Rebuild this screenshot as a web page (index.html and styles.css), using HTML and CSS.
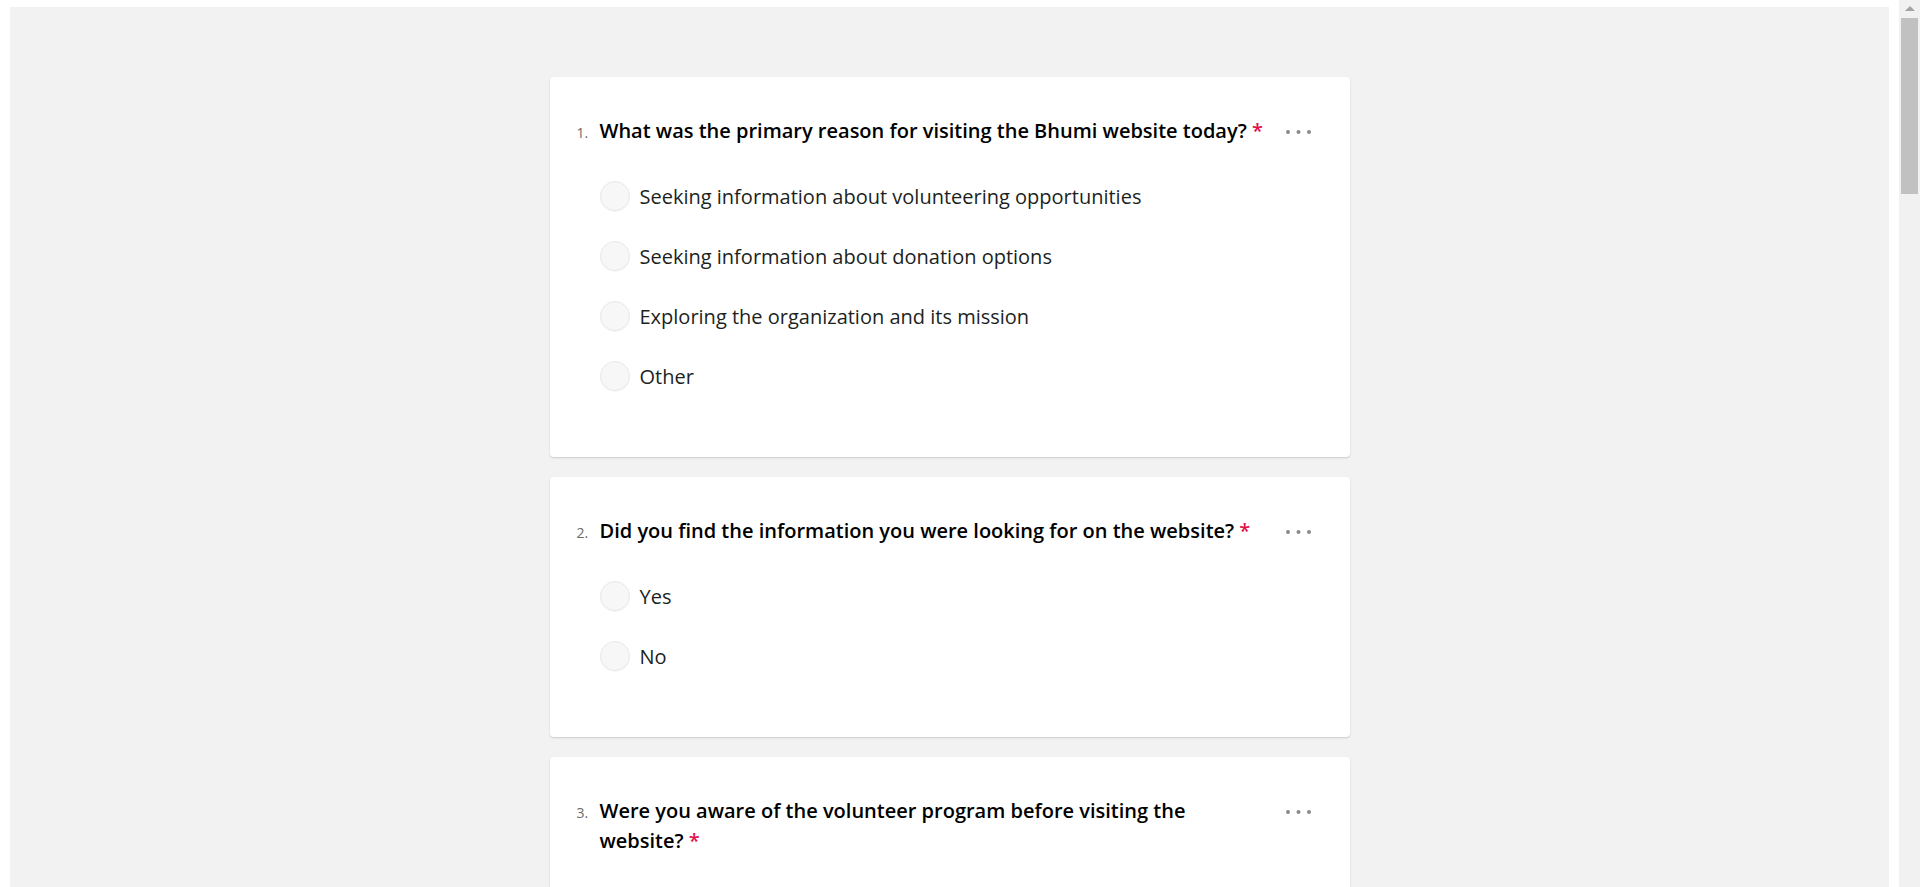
FILE: index.html
```html
<!DOCTYPE html>
<html lang="en">
<head>
<meta charset="utf-8">
<title>Bhumi website survey</title>
<link rel="stylesheet" href="styles.css">
</head>
<body>
<div class="viewport">
  <main class="page">
    <div class="canvas">
      <section class="card">
        <div class="q-head">
          <span class="q-num">1.</span>
          <h2 class="q-title">What was the primary reason for visiting the Bhumi website today? <span class="req">*</span></h2>
          <div class="q-more"><svg width="26" height="4" viewBox="0 0 26 4"><circle cx="2" cy="2" r="2"/><circle cx="12.5" cy="2" r="2"/><circle cx="23" cy="2" r="2"/></svg></div>
        </div>
        <div class="options">
          <label class="opt"><span class="radio"></span><span class="opt-text">Seeking information about volunteering opportunities</span></label>
          <label class="opt"><span class="radio"></span><span class="opt-text">Seeking information about donation options</span></label>
          <label class="opt"><span class="radio"></span><span class="opt-text">Exploring the organization and its mission</span></label>
          <label class="opt"><span class="radio"></span><span class="opt-text">Other</span></label>
        </div>
      </section>
      <section class="card">
        <div class="q-head">
          <span class="q-num">2.</span>
          <h2 class="q-title">Did you find the information you were looking for on the website? <span class="req">*</span></h2>
          <div class="q-more"><svg width="26" height="4" viewBox="0 0 26 4"><circle cx="2" cy="2" r="2"/><circle cx="12.5" cy="2" r="2"/><circle cx="23" cy="2" r="2"/></svg></div>
        </div>
        <div class="options">
          <label class="opt"><span class="radio"></span><span class="opt-text">Yes</span></label>
          <label class="opt"><span class="radio"></span><span class="opt-text">No</span></label>
        </div>
      </section>
      <section class="card">
        <div class="q-head">
          <span class="q-num">3.</span>
          <h2 class="q-title">Were you aware of the volunteer program before visiting the website? <span class="req">*</span></h2>
          <div class="q-more"><svg width="26" height="4" viewBox="0 0 26 4"><circle cx="2" cy="2" r="2"/><circle cx="12.5" cy="2" r="2"/><circle cx="23" cy="2" r="2"/></svg></div>
        </div>
        <div class="options">
          <label class="opt"><span class="radio"></span><span class="opt-text">Yes</span></label>
          <label class="opt"><span class="radio"></span><span class="opt-text">No</span></label>
        </div>
      </section>
    </div>
  </main>
  <div class="scrollbar">
    <div class="sb-arrow"></div>
    <div class="sb-thumb"></div>
  </div>
</div>
</body>
</html>
```

FILE: styles.css
```css
html, body {
  margin: 0;
  padding: 0;
  height: 100%;
  overflow: hidden;
  background: #ffffff;
}

body {
  font-family: "Open Sans", "Noto Sans", "Liberation Sans", sans-serif;
  color: #201f1e;
}

.viewport {
  display: flex;
  height: 887px;
}

.page {
  flex: 1;
  padding: 7px 10px 0 10px;
  overflow: hidden;
}

.canvas {
  background: #f2f2f2;
  height: 100%;
  padding-top: 70px;
  display: flex;
  flex-direction: column;
  align-items: center;
  gap: 20px;
  box-sizing: border-box;
}

.card {
  width: 800px;
  box-sizing: border-box;
  background: #ffffff;
  border-radius: 4px;
  box-shadow: 0 1px 2px rgba(0, 0, 0, 0.16);
  padding: 39px 38px 66px 27px;
  flex: none;
}

.q-head {
  display: flex;
  align-items: baseline;
}

.q-num {
  width: 23px;
  flex: none;
  font-size: 14px;
  color: #6b6b6b;
}

.q-title {
  flex: 1;
  margin: 0;
  font-size: 20px;
  font-weight: 600;
  line-height: 30px;
  color: #000000;
}

.req {
  color: #e2114b;
  font-weight: 600;
}

.q-more {
  width: 46px;
  flex: none;
  display: flex;
  justify-content: flex-end;
  align-self: flex-start;
  padding-top: 14px;
}

.q-more svg {
  display: block;
  fill: #8a8a8a;
}

.options {
  display: flex;
  flex-direction: column;
  gap: 30px;
  margin-top: 35px;
  padding-left: 23px;
}

.opt {
  display: flex;
  align-items: center;
  height: 30px;
  gap: 10px;
}

.radio {
  width: 28px;
  height: 28px;
  flex: none;
  border-radius: 50%;
  background: #f7f7f7;
  border: 1px solid #e9e9e9;
  box-shadow: 0 1px 1px rgba(0, 0, 0, 0.04);
}

.opt-text {
  font-size: 20px;
  color: #201f1e;
}

.scrollbar {
  width: 21px;
  flex: none;
  background: #f1f1f1;
}

.sb-arrow {
  margin: 6px auto 0 auto;
  width: 0;
  height: 0;
  border-left: 5px solid transparent;
  border-right: 5px solid transparent;
  border-bottom: 5px solid #a3a3a3;
}

.sb-thumb {
  margin: 7px 0 0 2px;
  width: 17px;
  height: 176px;
  background: #c1c1c1;
}
```
